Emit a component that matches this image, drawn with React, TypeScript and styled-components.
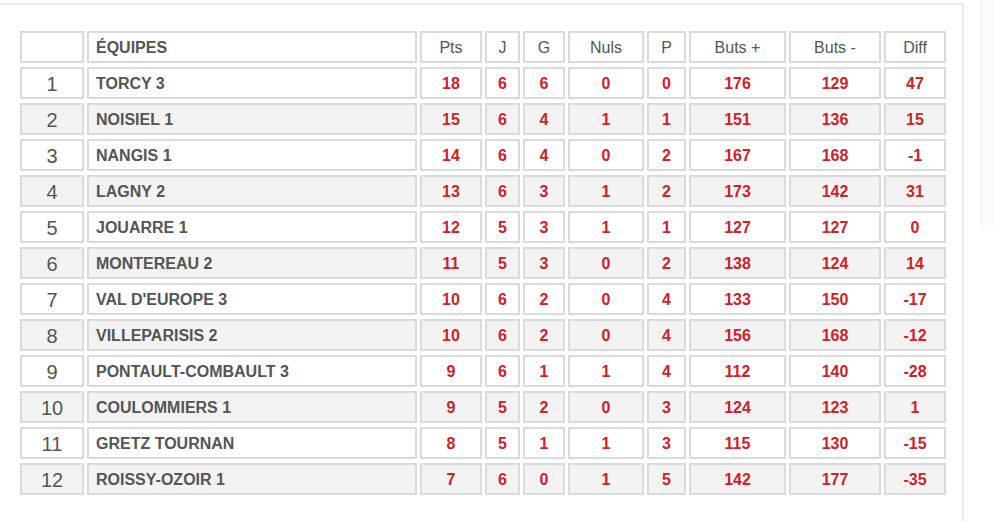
import { FC } from 'react';
import styled, { createGlobalStyle } from 'styled-components';

const GlobalStyle = createGlobalStyle`
  *, *::before, *::after {
    box-sizing: border-box;
  }
  html, body {
    margin: 0;
    padding: 0;
    background: #fff;
    font-family: 'Liberation Sans', Arial, sans-serif;
  }
`;

const Page = styled.div`
  display: flex;
  align-items: flex-start;
  gap: 17px;
  padding-top: 3px;
  width: 994px;
  height: 521px;
  overflow: hidden;
`;

const Panel = styled.section`
  flex: 0 0 966px;
  margin-left: -2px;
  padding: 22px 0 60px 17px;
  border: 2px solid #e9e9e9;
  border-bottom: none;
`;

const Sidebar = styled.aside`
  flex: 1;
  height: 225px;
  margin-top: -3px;
  background: #fbfbfb;
  border-left: 1px solid #f1f1f1;
`;

const Table = styled.table`
  table-layout: fixed;
  width: 932px;
  border-collapse: separate;
  border-spacing: 3px 4px;
`;

const Cell = styled.td<{ $w?: number; $align?: 'left' | 'center' }>`
  width: ${({ $w }) => ($w ? `${$w}px` : 'auto')};
  height: 32px;
  padding: 2px ${({ $align }) => ($align === 'left' ? '7px' : '0')} 0;
  border: 2px solid #dadada;
  text-align: ${({ $align }) => $align || 'center'};
  vertical-align: middle;
  white-space: nowrap;
  line-height: 1;
`;

const HeadCell = styled(Cell).attrs({ as: 'th' })<{ $bold?: boolean }>`
  background: #fff;
  color: #555;
  font-size: 16px;
  font-weight: ${({ $bold }) => ($bold ? 700 : 400)};
`;

const Row = styled.tr<{ $alt: boolean }>`
  td {
    background: ${({ $alt }) => ($alt ? '#f3f3f3' : '#fff')};
  }
`;

const RankCell = styled(Cell)`
  color: #555;
  font-size: 20px;
  font-weight: 400;
`;

const TeamCell = styled(Cell)`
  color: #555;
  font-size: 16px;
  font-weight: 700;
`;

const StatCell = styled(Cell)`
  color: #cc2229;
  font-size: 16px;
  font-weight: 700;
`;

interface Team {
  name: string;
  stats: number[];
}

const teams: Team[] = [
  { name: 'TORCY 3', stats: [18, 6, 6, 0, 0, 176, 129, 47] },
  { name: 'NOISIEL 1', stats: [15, 6, 4, 1, 1, 151, 136, 15] },
  { name: 'NANGIS 1', stats: [14, 6, 4, 0, 2, 167, 168, -1] },
  { name: 'LAGNY 2', stats: [13, 6, 3, 1, 2, 173, 142, 31] },
  { name: 'JOUARRE 1', stats: [12, 5, 3, 1, 1, 127, 127, 0] },
  { name: 'MONTEREAU 2', stats: [11, 5, 3, 0, 2, 138, 124, 14] },
  { name: "VAL D'EUROPE 3", stats: [10, 6, 2, 0, 4, 133, 150, -17] },
  { name: 'VILLEPARISIS 2', stats: [10, 6, 2, 0, 4, 156, 168, -12] },
  { name: 'PONTAULT-COMBAULT 3', stats: [9, 6, 1, 1, 4, 112, 140, -28] },
  { name: 'COULOMMIERS 1', stats: [9, 5, 2, 0, 3, 124, 123, 1] },
  { name: 'GRETZ TOURNAN', stats: [8, 5, 1, 1, 3, 115, 130, -15] },
  { name: 'ROISSY-OZOIR 1', stats: [7, 6, 0, 1, 5, 142, 177, -35] },
];

const statColumns = [
  { label: 'Pts', width: 62 },
  { label: 'J', width: 35 },
  { label: 'G', width: 42 },
  { label: 'Nuls', width: 76 },
  { label: 'P', width: 39 },
  { label: 'Buts +', width: 97 },
  { label: 'Buts -', width: 92 },
  { label: 'Diff', width: 62 },
];

const Standings: FC = () => (
  <Table>
    <thead>
      <tr>
        <HeadCell $w={64} />
        <HeadCell $w={330} $align="left" $bold>
          ÉQUIPES
        </HeadCell>
        {statColumns.map((col) => (
          <HeadCell key={col.label} $w={col.width}>
            {col.label}
          </HeadCell>
        ))}
      </tr>
    </thead>
    <tbody>
      {teams.map((team, idx) => (
        <Row key={team.name} $alt={idx % 2 === 1}>
          <RankCell>{idx + 1}</RankCell>
          <TeamCell $align="left">{team.name}</TeamCell>
          {team.stats.map((value, i) => (
            <StatCell key={i}>{value}</StatCell>
          ))}
        </Row>
      ))}
    </tbody>
  </Table>
);

const App: FC = () => (
  <>
    <GlobalStyle />
    <Page>
      <Panel>
        <Standings />
      </Panel>
      <Sidebar />
    </Page>
  </>
);

export default App;
